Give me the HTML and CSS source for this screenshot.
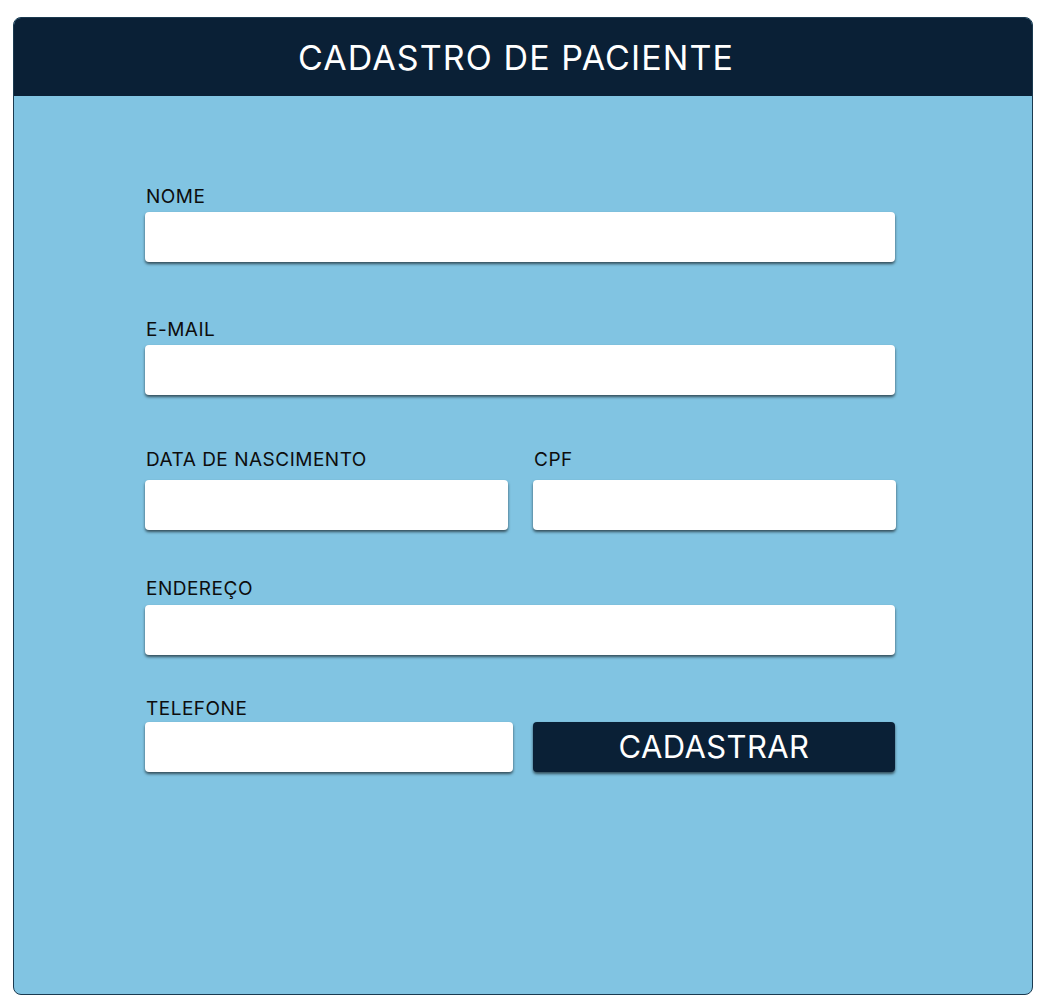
FILE: index.html
```html
<!DOCTYPE html>
<html lang="pt-BR">
<head>
<meta charset="utf-8">
<title>Cadastro de Paciente</title>
<link rel="stylesheet" href="styles.css">
</head>
<body>
<div class="card">
  <header class="card-header">
    <h1 class="title">CADASTRO DE PACIENTE</h1>
  </header>
  <form class="form">
    <div class="field field-nome">
      <label class="label" for="nome">NOME</label>
      <input class="input" id="nome" type="text">
    </div>
    <div class="field field-email">
      <label class="label" for="email">E-MAIL</label>
      <input class="input" id="email" type="email">
    </div>
    <div class="row row-data">
      <div class="field col-data">
        <label class="label label-data" for="nasc">DATA DE NASCIMENTO</label>
        <input class="input" id="nasc" type="text">
      </div>
      <div class="field col-cpf">
        <label class="label label-data" for="cpf">CPF</label>
        <input class="input" id="cpf" type="text">
      </div>
    </div>
    <div class="field field-endereco">
      <label class="label label-endereco" for="end">ENDEREÇO</label>
      <input class="input" id="end" type="text">
    </div>
    <div class="row row-tel">
      <div class="field col-tel">
        <label class="label label-tel" for="tel">TELEFONE</label>
        <input class="input" id="tel" type="text">
      </div>
      <button class="button" type="button">CADASTRAR</button>
    </div>
  </form>
</div>
</body>
</html>
```

FILE: styles.css
```css
* { box-sizing: border-box; }

body {
  margin: 0;
  background: #ffffff;
  font-family: Inter, "Noto Sans", sans-serif;
}

.card {
  margin: 17px 0 0 13px;
  width: 1020px;
  height: 978px;
  background: #81c4e2;
  border: 1px solid #1b3a50;
  border-radius: 8px;
  overflow: hidden;
}

.card-header {
  height: 78px;
  background: #0a2036;
  display: flex;
  align-items: center;
  justify-content: center;
  padding-right: 14px;
}

.title {
  margin: 0;
  color: #ffffff;
  font-weight: 400;
  font-size: 34px;
  line-height: 40px;
  letter-spacing: 1.1px;
  padding-top: 2px;
}

.form {
  padding: 90px 0 0 131px;
  width: 882px;
}

.label {
  display: block;
  font-size: 19px;
  line-height: 22px;
  letter-spacing: 0.5px;
  color: #0d0d0d;
  margin-bottom: 4px;
  padding-left: 1px;
}

.label-data { margin-bottom: 9px; }
.label-endereco { margin-bottom: 5px; }
.label-tel { margin-bottom: 2px; }

.input {
  display: block;
  width: 750px;
  height: 50px;
  border: none;
  border-radius: 4px;
  background: #ffffff;
  box-shadow: 0 2px 3px rgba(0, 0, 0, 0.6);
  outline: none;
}

.field-email { margin-top: 57px; }
.row-data { margin-top: 54px; }
.field-endereco { margin-top: 48px; }
.row-tel { margin-top: 43px; }

.row {
  display: flex;
  align-items: flex-end;
  gap: 20px;
}

.col-data .input { width: 363px; }
.col-cpf { margin-left: 5px; }
.col-cpf .input { width: 363px; }
.col-tel .input { width: 368px; }

.button {
  width: 362px;
  height: 50px;
  border: none;
  border-radius: 4px;
  background: #0a2036;
  color: #ffffff;
  font-family: Inter, "Noto Sans", sans-serif;
  font-size: 31px;
  letter-spacing: 0.4px;
  box-shadow: 0 2px 3px rgba(0, 0, 0, 0.6);
  padding: 0 0 2px 0;
}
```
